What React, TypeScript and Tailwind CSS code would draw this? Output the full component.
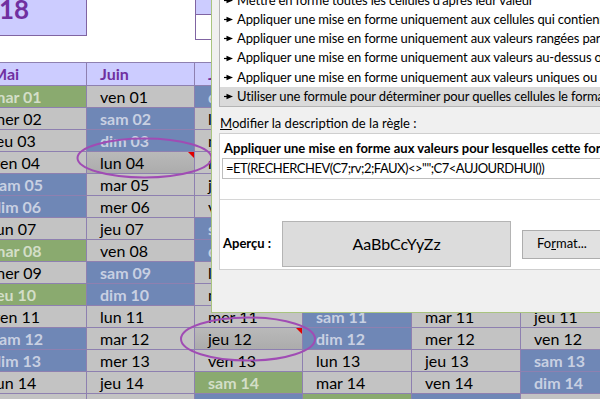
import React from 'react';

const DAYS = ['dim', 'lun', 'mar', 'mer', 'jeu', 'ven', 'sam'];
const HOLIDAYS = ['4-1', '4-8', '4-10', '4-21', '6-14', '7-15'];
const MARKED = ['5-4', '6-12'];

const months = [
  { name: 'Mai', m: 4, w: 'w-[108px]' },
  { name: 'Juin', m: 5, w: 'w-[108px]' },
  { name: 'Juillet', m: 6, w: 'w-[108px]' },
  { name: 'Août', m: 7, w: 'w-[109px]' },
  { name: 'Septembre', m: 8, w: 'w-[109px]' },
  { name: 'Octobre', m: 9, w: 'w-[108px]' },
];

const rules = [
  "Mettre en forme toutes les cellules d'après leur valeur",
  'Appliquer une mise en forme uniquement aux cellules qui contiennent',
  'Appliquer une mise en forme uniquement aux valeurs rangées parmi les premières ou les dernières valeurs',
  'Appliquer une mise en forme uniquement aux valeurs au-dessus ou en dessous de la moyenne',
  'Appliquer une mise en forme uniquement aux valeurs uniques ou en double',
  'Utiliser une formule pour déterminer pour quelles cellules le format sera appliqué',
];

function DayCell({ m, d, w }: { m: number; d: number; w: string }) {
  const date = new Date(2018, m, d);
  const wd = date.getDay();
  const key = `${m}-${d}`;
  const label = `${DAYS[wd]} ${String(d).padStart(2, '0')}`;
  const holiday = HOLIDAYS.includes(key);
  const weekend = wd === 0 || wd === 6;
  const marked = MARKED.includes(key);

  let tone = 'bg-[#c3c3c3] text-black';
  if (holiday) tone = 'bg-[#8aaa6f] text-[#d3dec8] font-bold';
  else if (weekend) tone = 'bg-[#6f87b6] text-[#c8d0e2] font-bold';
  else if (marked) tone = 'bg-gradient-to-b from-[#b9b9b9] to-[#acacac] text-black';

  return (
    <div className={`${w} ${tone} relative h-[22px] shrink-0 border-r border-b border-[#8e80b0] pl-[13px] flex items-center text-[16px] leading-none`}>
      {label}
      {marked && (
        <span className="absolute top-0 right-0 w-0 h-0 border-l-[6px] border-l-transparent border-t-[6px] border-t-[#e00000]" />
      )}
    </div>
  );
}

function Arrow() {
  return (
    <svg width="9" height="7" viewBox="0 0 9 7" className="shrink-0">
      <path d="M0 3.5 H4" stroke="#000" strokeWidth="1.2" />
      <path d="M2.5 0.8 L9 3.5 L2.5 6.2 Z" fill="#000" />
    </svg>
  );
}

export default function App() {
  return (
    <div className="relative w-[600px] h-[399px] overflow-hidden bg-white">
      {/* Sheet */}
      <div className="ml-[-21px] flex flex-col font-['Lato',sans-serif]">
        <div className="flex h-[62px]">
          <div className="w-[108px] h-[40px] shrink-0 bg-[#ccccff] border-r border-b border-[#8064a2] pl-[20px] text-[26px] font-bold leading-none text-[#7030a0] -mt-[4px]">
            18
          </div>
          <div className="w-[108px] shrink-0" />
          <div className="w-[108px] h-[40px] shrink-0 border-l border-b border-[#8064a2] flex flex-col">
            <div className="h-[15px] bg-[#ccccff] border-b border-[#8064a2]" />
          </div>
        </div>

        <div className="flex h-[24px] border-t border-[#8e80b0]">
          {months.map((mo) => (
            <div
              key={mo.name}
              className={`${mo.w} shrink-0 bg-[#ccccff] border-r border-b border-[#8e80b0] pl-[13px] flex items-center text-[16px] font-bold text-[#7030a0]`}
            >
              {mo.name}
            </div>
          ))}
        </div>

        {Array.from({ length: 15 }, (_, i) => i + 1).map((d) => (
          <div key={d} className="flex">
            {months.map((mo) => (
              <DayCell key={mo.name} m={mo.m} d={d} w={mo.w} />
            ))}
          </div>
        ))}
      </div>

      {/* Annotations */}
      <svg className="absolute inset-0 pointer-events-none" width="600" height="399">
        <ellipse cx="144.5" cy="158" rx="67" ry="19.5" fill="none" stroke="#a04cb4" strokeWidth="2" />
        <ellipse cx="248" cy="339" rx="67" ry="21.5" fill="none" stroke="#a04cb4" strokeWidth="2" />
      </svg>

      {/* Rule dialog */}
      <div className="absolute left-[211px] top-0 w-[420px] h-[313px] bg-[#f0f0f0] border-l border-b border-[#a9c47f] flex flex-col font-['Lato',sans-serif] text-[13px] text-black whitespace-nowrap overflow-hidden">
        <div className="ml-[7px] -mt-[10px] border border-[#b4b4b4] bg-white flex flex-col">
          {rules.map((r, i) => (
            <div
              key={r}
              className={`h-[19.2px] flex items-center gap-[4px] pl-[4px] tracking-[-0.15px] ${i === 5 ? 'bg-[#dadada]' : ''}`}
            >
              <Arrow />
              <span>{r}</span>
            </div>
          ))}
        </div>

        <div className="mt-[6px] h-[20px] leading-[20px] pl-[8px]">
          <span className="underline">M</span>odifier la description de la règle :
        </div>

        <div className="ml-[7px] border border-[#cfcfcf] bg-white flex flex-col">
          <div className="h-[66px] border-b border-[#d6d6d6] flex flex-col">
            <div className="mt-[4px] h-[20px] leading-[20px] pl-[4px] font-bold">
              Appliquer une mise en forme aux valeurs pour lesquelles cette formule est vraie :
            </div>
            <div className="ml-[2px] h-[21px] border border-[#bdbdbd] pl-[3px] flex items-center tracking-[-0.5px]">
              =ET(RECHERCHEV(C7;rv;2;FAUX)&lt;&gt;"";C7&lt;AUJOURDHUI())
            </div>
          </div>
          <div className="h-[69px] pt-[19px] flex items-center">
            <div className="w-[62px] pl-[3px] font-bold">Aperçu :</div>
            <div className="w-[229px] h-[46px] bg-[#dcdcdc] border border-[#b4b4b4] flex items-center justify-center text-[16px]">
              AaBbCcYyZz
            </div>
            <div className="ml-[11px] w-[80px] h-[29px] bg-[#e1e1e1] border border-[#adadad] flex items-center justify-center">
              Fo<span className="underline">r</span>mat...
            </div>
          </div>
        </div>
      </div>
    </div>
  );
}
